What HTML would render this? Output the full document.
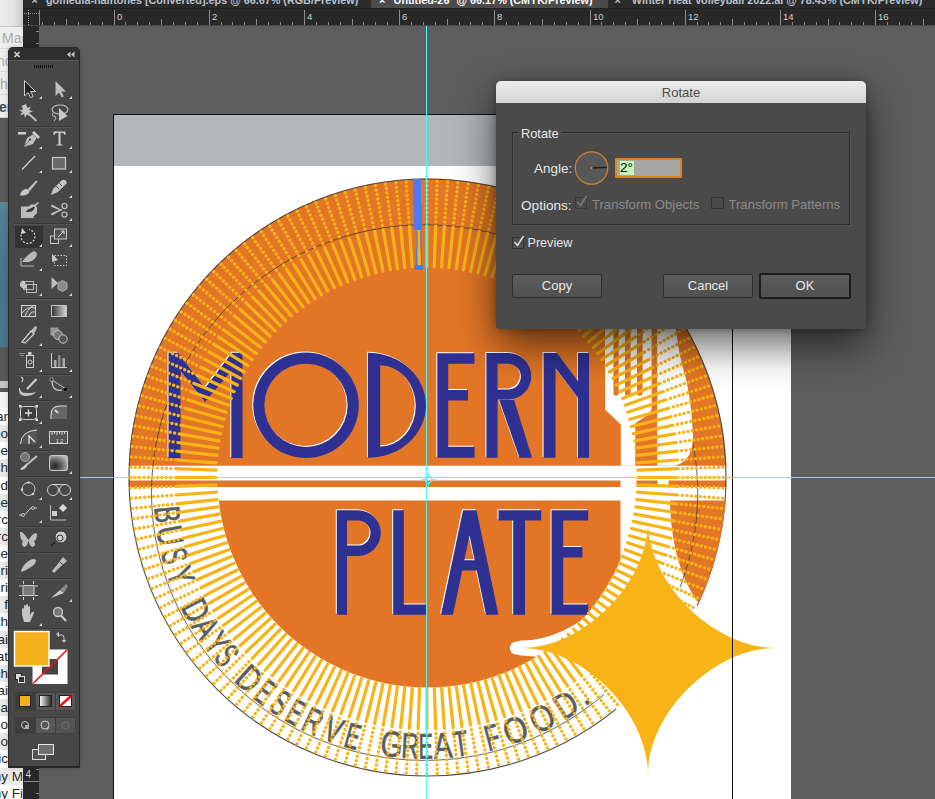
<!DOCTYPE html>
<html><head><meta charset="utf-8">
<style>
*{box-sizing:border-box;margin:0;padding:0}
html,body{width:935px;height:799px;overflow:hidden}
body{position:relative;background:#5e5e5e;font-family:"Liberation Sans",sans-serif}
.abs{position:absolute}
#leftwin{left:0;top:0;width:23px;height:799px;background:#f0f0f0;overflow:hidden}
#tabs{left:23px;top:0;width:912px;height:9px;background:#2a2a2a;overflow:hidden}
#tabs .t{position:absolute;top:-5.5px;height:11px;font-size:10.8px;line-height:11px;font-weight:bold;white-space:nowrap;color:#b9c1cc}
#hr{left:23px;top:9px;width:912px;height:17px;background:#282828}
#vr{left:23px;top:25px;width:16px;height:774px;background:#282828}
#tools{left:8px;top:47px;width:72px;height:721px;background:#474747;border-radius:5px 5px 0 0;border:1px solid #262626;border-bottom-width:2px;box-shadow:0 0 5px rgba(0,0,0,.22)}
#tools .hd{position:absolute;left:0;top:0;width:70px;height:13px;background:#2f2f2f;border-radius:4px 4px 0 0;border-bottom:1px solid #575757}
#dlg{left:496px;top:81px;width:370px;height:248px;background:#4a4a4a;border-radius:5px 5px 4px 4px;box-shadow:0 16px 42px rgba(0,0,0,.62),0 0 8px rgba(0,0,0,.3)}
#dlg .title{position:absolute;left:0;top:0;width:370px;height:22px;background:linear-gradient(#ececec,#d3d3d3);border-radius:5px 5px 0 0;text-align:center;font-size:13px;line-height:24px;color:#4a4a4a}
.lbl{position:absolute;font-size:12.5px;color:#e6e6e6;white-space:nowrap;line-height:15px}
.dis{color:#8a8a8a}
.btn{position:absolute;height:24px;background:linear-gradient(#5c5c5c,#505050);border:1px solid #2d2d2d;border-radius:2px;font-size:13px;line-height:22px;text-align:center;color:#e8e8e8}
</style></head><body>

<div id="leftwin" class="abs"><div class="abs" style="left:0;top:0;width:23px;height:26px;background:linear-gradient(90deg,#ededed,#e2e2e2 60%,#c9c9c9)"></div><div class="abs" style="left:0;top:26px;width:23px;height:1px;background:#c4c4c4"></div><div class="abs" style="left:0;top:27px;width:23px;height:22px;background:#eeeeee;border-bottom:1px solid #d6d6d6;overflow:hidden"><span style="position:absolute;left:2px;top:3px;font-size:14px;line-height:16px;color:#a9a9a9;font-weight:normal;white-space:nowrap">Mac</span></div><div class="abs" style="left:0;top:50px;width:23px;height:22px;background:#eeeeee;border-bottom:1px solid #d6d6d6;overflow:hidden"><span style="position:absolute;left:-3px;top:3px;font-size:14px;line-height:16px;color:#a9a9a9;font-weight:normal;white-space:nowrap">nc</span></div><div class="abs" style="left:0;top:73px;width:23px;height:22px;background:#eeeeee;border-bottom:1px solid #d6d6d6;overflow:hidden"><span style="position:absolute;left:0px;top:3px;font-size:14px;line-height:16px;color:#a9a9a9;font-weight:normal;white-space:nowrap">h</span></div><div class="abs" style="left:0;top:96px;width:23px;height:22px;background:#eeeeee;border-bottom:1px solid #d6d6d6;overflow:hidden"><span style="position:absolute;left:-1px;top:3px;font-size:14px;line-height:16px;color:#3a4a5a;font-weight:bold;white-space:nowrap">er</span></div><div class="abs" style="left:0;top:118px;width:23px;height:84px;background:#5a5a5a"></div><div class="abs" style="left:0;top:202px;width:23px;height:145px;background:linear-gradient(#5d8c9b,#4f8092 8%,#44758a 60%,#487a8c)"></div><div class="abs" style="left:0;top:347px;width:23px;height:34px;background:#585858"></div><div class="abs" style="left:0;top:381px;width:23px;height:7px;background:#c4c4c4"></div><div class="abs" style="left:0;top:388px;width:23px;height:4px;background:#565656"></div><div class="abs" style="left:0;top:392px;width:23px;height:16px;background:#f4f4f4"></div><div class="abs" style="left:0;top:408.0px;width:23px;height:17.2px;background:#ffffff;overflow:hidden"><span style="position:absolute;right:15px;top:1px;font-size:13.5px;line-height:16px;color:#2b2b2b;white-space:nowrap">ar</span></div><div class="abs" style="left:0;top:425.1px;width:23px;height:17.2px;background:#e9e9e9;overflow:hidden"><span style="position:absolute;right:15px;top:1px;font-size:13.5px;line-height:16px;color:#2b2b2b;white-space:nowrap">oo</span></div><div class="abs" style="left:0;top:442.2px;width:23px;height:17.2px;background:#ffffff;overflow:hidden"><span style="position:absolute;right:15px;top:1px;font-size:13.5px;line-height:16px;color:#2b2b2b;white-space:nowrap">le</span></div><div class="abs" style="left:0;top:459.4px;width:23px;height:17.2px;background:#e9e9e9;overflow:hidden"><span style="position:absolute;right:15px;top:1px;font-size:13.5px;line-height:16px;color:#2b2b2b;white-space:nowrap">ch</span></div><div class="abs" style="left:0;top:476.5px;width:23px;height:17.2px;background:#ffffff;overflow:hidden"><span style="position:absolute;right:15px;top:1px;font-size:13.5px;line-height:16px;color:#2b2b2b;white-space:nowrap">d</span></div><div class="abs" style="left:0;top:493.6px;width:23px;height:17.2px;background:#e9e9e9;overflow:hidden"><span style="position:absolute;right:15px;top:1px;font-size:13.5px;line-height:16px;color:#2b2b2b;white-space:nowrap">le</span></div><div class="abs" style="left:0;top:510.7px;width:23px;height:17.2px;background:#ffffff;overflow:hidden"><span style="position:absolute;right:15px;top:1px;font-size:13.5px;line-height:16px;color:#2b2b2b;white-space:nowrap">rc</span></div><div class="abs" style="left:0;top:527.8px;width:23px;height:17.2px;background:#e9e9e9;overflow:hidden"><span style="position:absolute;right:15px;top:1px;font-size:13.5px;line-height:16px;color:#2b2b2b;white-space:nowrap">rc</span></div><div class="abs" style="left:0;top:545.0px;width:23px;height:17.2px;background:#ffffff;overflow:hidden"><span style="position:absolute;right:15px;top:1px;font-size:13.5px;line-height:16px;color:#2b2b2b;white-space:nowrap">he</span></div><div class="abs" style="left:0;top:562.1px;width:23px;height:17.2px;background:#e9e9e9;overflow:hidden"><span style="position:absolute;right:15px;top:1px;font-size:13.5px;line-height:16px;color:#2b2b2b;white-space:nowrap">ri</span></div><div class="abs" style="left:0;top:579.2px;width:23px;height:17.2px;background:#ffffff;overflow:hidden"><span style="position:absolute;right:15px;top:1px;font-size:13.5px;line-height:16px;color:#2b2b2b;white-space:nowrap">ri</span></div><div class="abs" style="left:0;top:596.3px;width:23px;height:17.2px;background:#e9e9e9;overflow:hidden"><span style="position:absolute;right:15px;top:1px;font-size:13.5px;line-height:16px;color:#2b2b2b;white-space:nowrap">f</span></div><div class="abs" style="left:0;top:613.4px;width:23px;height:17.2px;background:#ffffff;overflow:hidden"><span style="position:absolute;right:15px;top:1px;font-size:13.5px;line-height:16px;color:#2b2b2b;white-space:nowrap">th</span></div><div class="abs" style="left:0;top:630.6px;width:23px;height:17.2px;background:#e9e9e9;overflow:hidden"><span style="position:absolute;right:15px;top:1px;font-size:13.5px;line-height:16px;color:#2b2b2b;white-space:nowrap">ai</span></div><div class="abs" style="left:0;top:647.7px;width:23px;height:17.2px;background:#ffffff;overflow:hidden"><span style="position:absolute;right:15px;top:1px;font-size:13.5px;line-height:16px;color:#2b2b2b;white-space:nowrap">at</span></div><div class="abs" style="left:0;top:664.8px;width:23px;height:17.2px;background:#e9e9e9;overflow:hidden"><span style="position:absolute;right:15px;top:1px;font-size:13.5px;line-height:16px;color:#2b2b2b;white-space:nowrap">ch</span></div><div class="abs" style="left:0;top:681.9px;width:23px;height:17.2px;background:#ffffff;overflow:hidden"><span style="position:absolute;right:15px;top:1px;font-size:13.5px;line-height:16px;color:#2b2b2b;white-space:nowrap">ai</span></div><div class="abs" style="left:0;top:699.0px;width:23px;height:17.2px;background:#e9e9e9;overflow:hidden"><span style="position:absolute;right:15px;top:1px;font-size:13.5px;line-height:16px;color:#2b2b2b;white-space:nowrap">ea</span></div><div class="abs" style="left:0;top:716.2px;width:23px;height:17.2px;background:#ffffff;overflow:hidden"><span style="position:absolute;right:15px;top:1px;font-size:13.5px;line-height:16px;color:#2b2b2b;white-space:nowrap">o</span></div><div class="abs" style="left:0;top:733.3px;width:23px;height:17.2px;background:#e9e9e9;overflow:hidden"><span style="position:absolute;right:15px;top:1px;font-size:13.5px;line-height:16px;color:#2b2b2b;white-space:nowrap">o</span></div><div class="abs" style="left:0;top:750.4px;width:23px;height:17.2px;background:#ffffff;overflow:hidden"><span style="position:absolute;right:15px;top:1px;font-size:13.5px;line-height:16px;color:#2b2b2b;white-space:nowrap">ic</span></div><div class="abs" style="left:0;top:767.5px;width:23px;height:17.2px;background:#e9e9e9;overflow:hidden"><span style="position:absolute;right:0px;top:1px;font-size:13.5px;line-height:16px;color:#2b2b2b;white-space:nowrap">ny M</span></div><div class="abs" style="left:0;top:784.6px;width:23px;height:17.2px;background:#ffffff;overflow:hidden"><span style="position:absolute;right:0px;top:1px;font-size:13.5px;line-height:16px;color:#2b2b2b;white-space:nowrap">ny Fi</span></div></div>
<div id="tabs" class="abs">
  <div class="t" style="left:8.5px">×</div>
  <div class="t" style="left:23px">gomedia-halftones [Converted].eps @ 66.67% (RGB/Preview)</div>
  <div class="abs" style="left:348px;top:0;width:237px;height:9px;background:#4b4b4b"></div>
  <div class="t" style="left:356px;color:#fff">×</div>
  <div class="t" style="left:370.6px;color:#fff">Untitled-26* @ 66.17% (CMYK/Preview)</div>
  <div class="t" style="left:591.5px">×</div>
  <div class="t" style="left:608.8px">Winter Heat Volleyball 2022.ai @ 78.43% (CMYK/Preview)</div>
  <div class="abs" style="left:0;top:8px;width:912px;height:1px;background:#1f1f1f"></div>
</div>
<div id="hr" class="abs"></div>
<div id="vr" class="abs"></div>

<svg class="abs" style="left:0;top:0" width="935" height="799">
 <g stroke="#8c8c8c" stroke-width="1"><line x1="42.5" y1="22" x2="42.5" y2="25" /><line x1="54.5" y1="22" x2="54.5" y2="25" /><line x1="66.5" y1="19" x2="66.5" y2="25" /><line x1="78.5" y1="22" x2="78.5" y2="25" /><line x1="90.5" y1="22" x2="90.5" y2="25" /><line x1="102.5" y1="22" x2="102.5" y2="25" /><line x1="114.5" y1="10" x2="114.5" y2="25" /><line x1="125.5" y1="22" x2="125.5" y2="25" /><line x1="137.5" y1="22" x2="137.5" y2="25" /><line x1="149.5" y1="22" x2="149.5" y2="25" /><line x1="161.5" y1="19" x2="161.5" y2="25" /><line x1="173.5" y1="22" x2="173.5" y2="25" /><line x1="185.5" y1="22" x2="185.5" y2="25" /><line x1="197.5" y1="22" x2="197.5" y2="25" /><line x1="209.5" y1="10" x2="209.5" y2="25" /><line x1="221.5" y1="22" x2="221.5" y2="25" /><line x1="232.5" y1="22" x2="232.5" y2="25" /><line x1="244.5" y1="22" x2="244.5" y2="25" /><line x1="256.5" y1="19" x2="256.5" y2="25" /><line x1="268.5" y1="22" x2="268.5" y2="25" /><line x1="280.5" y1="22" x2="280.5" y2="25" /><line x1="292.5" y1="22" x2="292.5" y2="25" /><line x1="304.5" y1="10" x2="304.5" y2="25" /><line x1="316.5" y1="22" x2="316.5" y2="25" /><line x1="328.5" y1="22" x2="328.5" y2="25" /><line x1="340.5" y1="22" x2="340.5" y2="25" /><line x1="352.5" y1="19" x2="352.5" y2="25" /><line x1="363.5" y1="22" x2="363.5" y2="25" /><line x1="375.5" y1="22" x2="375.5" y2="25" /><line x1="387.5" y1="22" x2="387.5" y2="25" /><line x1="399.5" y1="10" x2="399.5" y2="25" /><line x1="411.5" y1="22" x2="411.5" y2="25" /><line x1="423.5" y1="22" x2="423.5" y2="25" /><line x1="435.5" y1="22" x2="435.5" y2="25" /><line x1="447.5" y1="19" x2="447.5" y2="25" /><line x1="459.5" y1="22" x2="459.5" y2="25" /><line x1="470.5" y1="22" x2="470.5" y2="25" /><line x1="482.5" y1="22" x2="482.5" y2="25" /><line x1="494.5" y1="10" x2="494.5" y2="25" /><line x1="506.5" y1="22" x2="506.5" y2="25" /><line x1="518.5" y1="22" x2="518.5" y2="25" /><line x1="530.5" y1="22" x2="530.5" y2="25" /><line x1="542.5" y1="19" x2="542.5" y2="25" /><line x1="554.5" y1="22" x2="554.5" y2="25" /><line x1="566.5" y1="22" x2="566.5" y2="25" /><line x1="578.5" y1="22" x2="578.5" y2="25" /><line x1="590.5" y1="10" x2="590.5" y2="25" /><line x1="601.5" y1="22" x2="601.5" y2="25" /><line x1="613.5" y1="22" x2="613.5" y2="25" /><line x1="625.5" y1="22" x2="625.5" y2="25" /><line x1="637.5" y1="19" x2="637.5" y2="25" /><line x1="649.5" y1="22" x2="649.5" y2="25" /><line x1="661.5" y1="22" x2="661.5" y2="25" /><line x1="673.5" y1="22" x2="673.5" y2="25" /><line x1="685.5" y1="10" x2="685.5" y2="25" /><line x1="697.5" y1="22" x2="697.5" y2="25" /><line x1="708.5" y1="22" x2="708.5" y2="25" /><line x1="720.5" y1="22" x2="720.5" y2="25" /><line x1="732.5" y1="19" x2="732.5" y2="25" /><line x1="744.5" y1="22" x2="744.5" y2="25" /><line x1="756.5" y1="22" x2="756.5" y2="25" /><line x1="768.5" y1="22" x2="768.5" y2="25" /><line x1="780.5" y1="10" x2="780.5" y2="25" /><line x1="792.5" y1="22" x2="792.5" y2="25" /><line x1="804.5" y1="22" x2="804.5" y2="25" /><line x1="816.5" y1="22" x2="816.5" y2="25" /><line x1="828.5" y1="19" x2="828.5" y2="25" /><line x1="839.5" y1="22" x2="839.5" y2="25" /><line x1="851.5" y1="22" x2="851.5" y2="25" /><line x1="863.5" y1="22" x2="863.5" y2="25" /><line x1="875.5" y1="10" x2="875.5" y2="25" /><line x1="887.5" y1="22" x2="887.5" y2="25" /><line x1="899.5" y1="22" x2="899.5" y2="25" /><line x1="911.5" y1="22" x2="911.5" y2="25" /><line x1="923.5" y1="19" x2="923.5" y2="25" /><line x1="935.5" y1="22" x2="935.5" y2="25" /><line x1="36" y1="31.5" x2="39" y2="31.5" /><line x1="36" y1="43.5" x2="39" y2="43.5" /><line x1="36" y1="55.5" x2="39" y2="55.5" /><line x1="33" y1="67.5" x2="39" y2="67.5" /><line x1="36" y1="79.5" x2="39" y2="79.5" /><line x1="36" y1="90.5" x2="39" y2="90.5" /><line x1="36" y1="102.5" x2="39" y2="102.5" /><line x1="24" y1="114.5" x2="39" y2="114.5" /><line x1="36" y1="126.5" x2="39" y2="126.5" /><line x1="36" y1="138.5" x2="39" y2="138.5" /><line x1="36" y1="150.5" x2="39" y2="150.5" /><line x1="33" y1="162.5" x2="39" y2="162.5" /><line x1="36" y1="174.5" x2="39" y2="174.5" /><line x1="36" y1="186.5" x2="39" y2="186.5" /><line x1="36" y1="197.5" x2="39" y2="197.5" /><line x1="24" y1="209.5" x2="39" y2="209.5" /><line x1="36" y1="221.5" x2="39" y2="221.5" /><line x1="36" y1="233.5" x2="39" y2="233.5" /><line x1="36" y1="245.5" x2="39" y2="245.5" /><line x1="33" y1="257.5" x2="39" y2="257.5" /><line x1="36" y1="269.5" x2="39" y2="269.5" /><line x1="36" y1="281.5" x2="39" y2="281.5" /><line x1="36" y1="293.5" x2="39" y2="293.5" /><line x1="24" y1="305.5" x2="39" y2="305.5" /><line x1="36" y1="317.5" x2="39" y2="317.5" /><line x1="36" y1="328.5" x2="39" y2="328.5" /><line x1="36" y1="340.5" x2="39" y2="340.5" /><line x1="33" y1="352.5" x2="39" y2="352.5" /><line x1="36" y1="364.5" x2="39" y2="364.5" /><line x1="36" y1="376.5" x2="39" y2="376.5" /><line x1="36" y1="388.5" x2="39" y2="388.5" /><line x1="24" y1="400.5" x2="39" y2="400.5" /><line x1="36" y1="412.5" x2="39" y2="412.5" /><line x1="36" y1="424.5" x2="39" y2="424.5" /><line x1="36" y1="435.5" x2="39" y2="435.5" /><line x1="33" y1="447.5" x2="39" y2="447.5" /><line x1="36" y1="459.5" x2="39" y2="459.5" /><line x1="36" y1="471.5" x2="39" y2="471.5" /><line x1="36" y1="483.5" x2="39" y2="483.5" /><line x1="24" y1="495.5" x2="39" y2="495.5" /><line x1="36" y1="507.5" x2="39" y2="507.5" /><line x1="36" y1="519.5" x2="39" y2="519.5" /><line x1="36" y1="531.5" x2="39" y2="531.5" /><line x1="33" y1="543.5" x2="39" y2="543.5" /><line x1="36" y1="555.5" x2="39" y2="555.5" /><line x1="36" y1="566.5" x2="39" y2="566.5" /><line x1="36" y1="578.5" x2="39" y2="578.5" /><line x1="24" y1="590.5" x2="39" y2="590.5" /><line x1="36" y1="602.5" x2="39" y2="602.5" /><line x1="36" y1="614.5" x2="39" y2="614.5" /><line x1="36" y1="626.5" x2="39" y2="626.5" /><line x1="33" y1="638.5" x2="39" y2="638.5" /><line x1="36" y1="650.5" x2="39" y2="650.5" /><line x1="36" y1="662.5" x2="39" y2="662.5" /><line x1="36" y1="674.5" x2="39" y2="674.5" /><line x1="24" y1="685.5" x2="39" y2="685.5" /><line x1="36" y1="697.5" x2="39" y2="697.5" /><line x1="36" y1="709.5" x2="39" y2="709.5" /><line x1="36" y1="721.5" x2="39" y2="721.5" /><line x1="33" y1="733.5" x2="39" y2="733.5" /><line x1="36" y1="745.5" x2="39" y2="745.5" /><line x1="36" y1="757.5" x2="39" y2="757.5" /><line x1="36" y1="769.5" x2="39" y2="769.5" /><line x1="24" y1="781.5" x2="39" y2="781.5" /><line x1="36" y1="793.5" x2="39" y2="793.5" /></g>
 <line x1="23" y1="25.5" x2="935" y2="25.5" stroke="#4a4a4a"/>
 <g fill="#d0d0d0" font-size="9.5" font-family="Liberation Sans"><text x="117" y="20">0</text><text x="212" y="20">2</text><text x="307" y="20">4</text><text x="402" y="20">6</text><text x="497" y="20">8</text><text x="593" y="20">10</text><text x="688" y="20">12</text><text x="783" y="20">14</text><text x="878" y="20">16</text></g>
 <line x1="24" y1="13.5" x2="39" y2="13.5" stroke="#9a9a9a" stroke-dasharray="1 1"/>
 <line x1="28.5" y1="10" x2="28.5" y2="25" stroke="#9a9a9a" stroke-dasharray="1 1"/>
 <line x1="39.5" y1="10" x2="39.5" y2="25" stroke="#8c8c8c"/>
 <text x="25.5" y="777.5" fill="#d0d0d0" font-size="10" font-family="Liberation Sans">4</text>
</svg>

<!-- artboard -->
<div class="abs" style="left:733px;top:115px;width:58px;height:684px;background:#fff"></div>
<div class="abs" style="left:113px;top:114px;width:620px;height:690px;background:#fff;border:1px solid #111"></div>
<div class="abs" style="left:114px;top:115px;width:618px;height:51px;background:#b2b6b9"></div>

<svg class="abs" style="left:0;top:0" width="935" height="799">
 <defs>
  <clipPath id="up"><rect x="0" y="0" width="935" height="465.7"/></clipPath>
  <clipPath id="disk"><circle cx="427.5" cy="477.5" r="299"/></clipPath>
  <clipPath id="low"><rect x="0" y="500.5" width="620.5" height="400"/></clipPath>
 </defs>
 <circle cx="427.5" cy="477.5" r="299" fill="#e37626" clip-path="url(#up)"/>
 <g clip-path="url(#disk)" fill="#e37626">
  <rect x="100" y="480.5" width="520.5" height="6.5"/>
  <rect x="636.5" y="480.5" width="21" height="6.5"/>
  <rect x="668.5" y="480.5" width="80" height="6.5"/>
 </g>
 <circle cx="427.5" cy="477.5" r="210" fill="#e37626" clip-path="url(#low)"/>
 <circle cx="427.5" cy="477.5" r="298.5" fill="none" stroke="#4a4a4a" stroke-width="1.1"/>
 <path d="M670 500.5H760V650L697 601C683 580 671 550 670 500.5Z" fill="#e37626" clip-path="url(#disk)"/>
 <ellipse cx="424.6" cy="492.6" rx="273.1" ry="267.8" fill="none" stroke="#3c3c3c" stroke-width="0.8"/>
 <!-- right side fork/crescents -->
 <g clip-path="url(#disk)">
  <path d="M605 300V409.5L620.8 424.5V465.7H673Q692 463 693 438C692.5 415 689 390 685 375C681 360 676 345 674 300Z" fill="#fff"/>
  <path d="M613.5 300V393A2.6 2.6 0 0 0 618.7 393V300Z M625 300V393A2.8 2.8 0 0 0 630.6 393V300Z M637 300V393A2.8 2.8 0 0 0 642.6 393V300Z" fill="#e37626"/>
  <path d="M651.6 300V409Q651 414 635.3 423V465.7H657.2V300Z" fill="#e37626"/>
 </g>
 <!-- letters -->
 <g fill="#fff" transform="translate(-1,-1)"><path fill-rule="evenodd" d="M168.5 458V352.8H178L205 388L232 352.8H242.5V458H231.3V371L205 402L180.5 371V458Z"/><path fill-rule="evenodd" d="M306 352.5A52.8 52.8 0 1 1 306 458.1A52.8 52.8 0 1 1 306 352.5ZM306 363.7A41.6 41.6 0 1 0 306 446.9A41.6 41.6 0 1 0 306 363.7Z"/><path fill-rule="evenodd" d="M368 352.7A58 52.55 0 0 1 368 457.8ZM380.2 365.3A35.6 40.65 0 0 1 380.2 446.6Z"/><path d="M437.3 353.2H474.5V363.7H448.2V390H468V400.5H448.2V446.8H474.5V457.7H437.3Z"/><path fill-rule="evenodd" d="M486.4 353H508A23.3 23.3 0 0 1 508 399.6H497.6V457.7H486.4ZM497.6 363.7H508A12.9 12.9 0 0 1 508 389.5H497.6Z"/><path d="M499 399.5H514L532 457.7H519.5Z"/><path d="M543.6 353H557L578 381V353H589V457.7H578V398L555.5 368V457.7H543.6Z"/><path fill-rule="evenodd" d="M336.8 510.3H358A22.8 22.8 0 0 1 358 555.9H347V614.7H336.8ZM347 520.6H358A12.5 12.5 0 0 1 358 545.6H347Z"/><path d="M393.2 510.3H403.8V604.4H426.5V614.7H393.2Z"/><path fill-rule="evenodd" d="M441 614.7L463 510.3H476.5L498.5 614.7H486L476.8 570.6H462.2L453 614.7ZM469.5 535.3L474.7 560.3H464.3Z"/><path d="M498.5 510.3H541.2V520.6H525V614.7H513.2V520.6H498.5Z"/><path d="M551.5 510.3H588.2V520.6H563.2V547H582.4V557.4H563.2V604.4H588.2V614.7H551.5Z"/></g>
 <g fill="#2e3192"><path fill-rule="evenodd" d="M168.5 458V352.8H178L205 388L232 352.8H242.5V458H231.3V371L205 402L180.5 371V458Z"/><path fill-rule="evenodd" d="M306 352.5A52.8 52.8 0 1 1 306 458.1A52.8 52.8 0 1 1 306 352.5ZM306 363.7A41.6 41.6 0 1 0 306 446.9A41.6 41.6 0 1 0 306 363.7Z"/><path fill-rule="evenodd" d="M368 352.7A58 52.55 0 0 1 368 457.8ZM380.2 365.3A35.6 40.65 0 0 1 380.2 446.6Z"/><path d="M437.3 353.2H474.5V363.7H448.2V390H468V400.5H448.2V446.8H474.5V457.7H437.3Z"/><path fill-rule="evenodd" d="M486.4 353H508A23.3 23.3 0 0 1 508 399.6H497.6V457.7H486.4ZM497.6 363.7H508A12.9 12.9 0 0 1 508 389.5H497.6Z"/><path d="M499 399.5H514L532 457.7H519.5Z"/><path d="M543.6 353H557L578 381V353H589V457.7H578V398L555.5 368V457.7H543.6Z"/><path fill-rule="evenodd" d="M336.8 510.3H358A22.8 22.8 0 0 1 358 555.9H347V614.7H336.8ZM347 520.6H358A12.5 12.5 0 0 1 358 545.6H347Z"/><path d="M393.2 510.3H403.8V604.4H426.5V614.7H393.2Z"/><path fill-rule="evenodd" d="M441 614.7L463 510.3H476.5L498.5 614.7H486L476.8 570.6H462.2L453 614.7ZM469.5 535.3L474.7 560.3H464.3Z"/><path d="M498.5 510.3H541.2V520.6H525V614.7H513.2V520.6H498.5Z"/><path d="M551.5 510.3H588.2V520.6H563.2V547H582.4V557.4H563.2V604.4H588.2V614.7H551.5Z"/></g>
 <!-- curved text -->
 <g font-family="Liberation Sans" font-size="36" fill="#585d64" stroke="#585d64" stroke-width="0.7" text-anchor="middle"><text transform="translate(155.11,515.55) rotate(84.97) scale(0.699,1)">B</text><text transform="translate(158.02,537.72) rotate(80.07) scale(0.752,1)">U</text><text transform="translate(162.65,558.95) rotate(75.32) scale(0.601,1)">S</text><text transform="translate(169.10,579.95) rotate(70.53) scale(0.708,1)">Y</text><text transform="translate(185.05,616.15) rotate(61.93) scale(0.818,1)">D</text><text transform="translate(195.64,634.25) rotate(57.39) scale(0.783,1)">A</text><text transform="translate(207.02,650.64) rotate(53.09) scale(0.708,1)">Y</text><text transform="translate(217.40,663.60) rotate(49.52) scale(0.601,1)">S</text><text transform="translate(240.98,687.93) rotate(42.27) scale(0.818,1)">D</text><text transform="translate(257.80,702.01) rotate(37.60) scale(0.602,1)">E</text><text transform="translate(273.44,713.19) rotate(33.53) scale(0.601,1)">S</text><text transform="translate(289.66,723.14) rotate(29.51) scale(0.602,1)">E</text><text transform="translate(307.89,732.57) rotate(25.19) scale(0.684,1)">R</text><text transform="translate(329.18,741.50) rotate(20.34) scale(0.714,1)">V</text><text transform="translate(349.54,748.15) rotate(15.86) scale(0.602,1)">E</text><text transform="translate(390.28,756.45) rotate(7.17) scale(0.797,1)">G</text><text transform="translate(409.74,758.20) rotate(3.10) scale(0.684,1)">R</text><text transform="translate(425.66,758.60) rotate(-0.22) scale(0.602,1)">E</text><text transform="translate(443.70,757.94) rotate(-3.98) scale(0.783,1)">A</text><text transform="translate(462.50,755.98) rotate(-7.92) scale(0.662,1)">T</text><text transform="translate(495.36,749.34) rotate(-14.92) scale(0.650,1)">F</text><text transform="translate(519.62,741.65) rotate(-20.25) scale(0.854,1)">O</text><text transform="translate(547.59,729.51) rotate(-26.66) scale(0.854,1)">O</text><text transform="translate(572.58,715.27) rotate(-32.73) scale(0.818,1)">D</text><text transform="translate(588.54,704.18) rotate(-36.84) scale(0.972,1)">.</text></g>
 <!-- star -->
 <path d="M648 521.5C648 583.5 714 648 776 648C714 648 648 712.5 648 774.5C648 712.5 583.4 648 521.4 648C583.4 648 648 583.5 648 521.5Z" fill="#fff" stroke="#fff" stroke-width="15" stroke-linejoin="round"/>
 <circle cx="516.5" cy="648" r="6.6" fill="#fff"/>
 <path d="M648 521.5C648 583.5 714 648 776 648C714 648 648 712.5 648 774.5C648 712.5 583.4 648 521.4 648C583.4 648 648 583.5 648 521.5Z" fill="#f8b417"/>
 <!-- rays -->
 <g stroke="#f8b417">
  <path d="M426.9 266.5L426.9 226.0M434.3 266.6L435.7 226.2M441.6 267.0L444.4 226.6M449.0 267.7L453.2 227.4M456.3 268.6L461.9 228.4M463.5 269.7L470.6 229.8M470.8 271.1L479.2 231.5M477.9 272.8L487.7 233.5M485.1 274.7L496.2 235.7M492.1 276.8L504.6 238.3M499.1 279.2L512.9 241.2M505.9 281.9L521.1 244.3M512.7 284.7L529.2 247.7M519.4 287.9L537.2 251.5M526.0 291.2L545.0 255.4M532.4 294.8L552.6 259.7M538.7 298.6L560.2 264.2M544.9 302.6L567.5 269.0M550.9 306.8L574.7 274.0M556.8 311.2L581.7 279.3M562.5 315.9L588.6 284.8M568.1 320.7L595.2 290.6M573.5 325.7L601.6 296.6M578.7 330.9L607.8 302.8M583.7 336.3L613.8 309.2M588.5 341.9L619.6 315.8M593.2 347.6L625.1 322.7M597.6 353.5L630.4 329.7M601.8 359.5L635.4 336.9M605.8 365.7L640.2 344.2M609.6 372.0L644.7 351.8M613.2 378.4L649.0 359.4M616.5 385.0L652.9 367.2M619.7 391.7L656.7 375.2M622.5 398.5L660.1 383.3M625.2 405.3L663.2 391.5M627.6 412.3L666.1 399.8M629.7 419.3L668.7 408.2M631.6 426.5L670.9 416.7M633.3 433.6L672.9 425.2M634.7 440.9L674.6 433.8M635.8 448.1L676.0 442.5M636.7 455.4L677.0 451.2M637.4 462.8L677.8 460.0M637.8 470.1L678.2 468.7M637.9 477.5L678.4 477.5M637.8 484.9L678.2 486.3M637.4 492.2L677.8 495.0M636.7 499.6L677.0 503.8M635.8 506.9L676.0 512.5M634.7 514.1L674.6 521.2M633.3 521.4L672.9 529.8M631.6 528.5L670.9 538.3M629.7 535.7L668.7 546.8M627.6 542.7L666.1 555.2M625.2 549.7L663.2 563.5M622.5 556.5L660.1 571.7M619.7 563.3L656.7 579.8M616.5 570.0L652.9 587.8M613.2 576.6L649.0 595.6M609.6 583.0L644.7 603.2M605.8 589.3L640.2 610.8M601.8 595.5L635.4 618.1M597.6 601.5L630.4 625.3M593.2 607.4L625.1 632.3M588.5 613.1L619.6 639.2M583.7 618.7L613.8 645.8M578.7 624.1L607.8 652.2M573.5 629.3L601.6 658.4M568.1 634.3L595.2 664.4M562.5 639.1L588.6 670.2M556.8 643.8L581.7 675.7M550.9 648.2L574.7 681.0M544.9 652.4L567.5 686.0M538.7 656.4L560.2 690.8M532.4 660.2L552.6 695.3M526.0 663.8L545.0 699.6M519.4 667.1L537.2 703.5M512.7 670.3L529.2 707.3M505.9 673.1L521.1 710.7M499.1 675.8L512.9 713.8M492.1 678.2L504.6 716.7M485.1 680.3L496.2 719.3M477.9 682.2L487.7 721.5M470.8 683.9L479.2 723.5M463.5 685.3L470.6 725.2M456.3 686.4L461.9 726.6M449.0 687.3L453.2 727.6M441.6 688.0L444.4 728.4M434.3 688.4L435.7 728.8M426.9 688.5L426.9 729.0M419.5 688.4L418.1 728.8M412.2 688.0L409.4 728.4M404.8 687.3L400.6 727.6M397.5 686.4L391.9 726.6M390.3 685.3L383.2 725.2M383.0 683.9L374.6 723.5M375.9 682.2L366.1 721.5M368.7 680.3L357.6 719.3M361.7 678.2L349.2 716.7M354.7 675.8L340.9 713.8M347.9 673.1L332.7 710.7M341.1 670.3L324.6 707.3M334.4 667.1L316.6 703.5M327.8 663.8L308.8 699.6M321.4 660.2L301.1 695.3M315.1 656.4L293.6 690.8M308.9 652.4L286.3 686.0M302.9 648.2L279.1 681.0M297.0 643.8L272.1 675.7M291.3 639.1L265.2 670.2M285.7 634.3L258.6 664.4M280.3 629.3L252.2 658.4M275.1 624.1L246.0 652.2M270.1 618.7L240.0 645.8M265.3 613.1L234.2 639.2M260.6 607.4L228.7 632.3M256.2 601.5L223.4 625.3M252.0 595.5L218.4 618.1M248.0 589.3L213.6 610.8M244.2 583.0L209.1 603.3M240.6 576.6L204.8 595.6M237.3 570.0L200.9 587.8M234.1 563.3L197.1 579.8M231.3 556.5L193.7 571.7M228.6 549.7L190.6 563.5M226.2 542.7L187.7 555.2M224.1 535.7L185.1 546.8M222.2 528.5L182.9 538.3M220.5 521.4L180.9 529.8M219.1 514.1L179.2 521.2M218.0 506.9L177.8 512.5M217.1 499.6L176.8 503.8M216.4 492.2L176.0 495.0M216.0 484.9L175.6 486.3M215.9 477.5L175.4 477.5M216.0 470.1L175.6 468.7M216.4 462.8L176.0 460.0M217.1 455.4L176.8 451.2M218.0 448.1L177.8 442.5M219.1 440.9L179.2 433.8M220.5 433.6L180.9 425.2M222.2 426.5L182.9 416.7M224.1 419.3L185.1 408.2M226.2 412.3L187.7 399.8M228.6 405.3L190.6 391.5M231.3 398.5L193.7 383.3M234.1 391.7L197.1 375.2M237.3 385.0L200.9 367.2M240.6 378.4L204.8 359.4M244.2 372.0L209.1 351.8M248.0 365.7L213.6 344.2M252.0 359.5L218.4 336.9M256.2 353.5L223.4 329.7M260.6 347.6L228.7 322.7M265.3 341.9L234.2 315.8M270.1 336.3L240.0 309.2M275.1 330.9L246.0 302.8M280.3 325.7L252.2 296.6M285.7 320.7L258.6 290.6M291.3 315.9L265.2 284.8M297.0 311.2L272.1 279.3M302.9 306.8L279.1 274.0M308.9 302.6L286.3 269.0M315.1 298.6L293.6 264.2M321.4 294.8L301.1 259.7M327.8 291.2L308.8 255.4M334.4 287.9L316.6 251.5M341.1 284.7L324.6 247.7M347.9 281.9L332.7 244.3M354.7 279.2L340.9 241.2M361.7 276.8L349.2 238.3M368.7 274.7L357.6 235.7M375.9 272.8L366.1 233.5M383.0 271.1L374.6 231.5M390.3 269.7L383.2 229.8M397.5 268.6L391.9 228.4M404.8 267.7L400.6 227.4M412.2 267.0L409.4 226.6M419.5 266.6L418.1 226.2" stroke-width="3.2" stroke-linecap="round"/>
  <path d="M426.90 181.20L426.90 223.00M437.24 181.38L435.78 223.16M447.57 181.92L444.65 223.62M457.87 182.82L453.50 224.39M468.14 184.08L462.32 225.48M478.35 185.70L471.09 226.87M488.50 187.67L479.81 228.56M498.58 190.00L488.47 230.56M508.57 192.68L497.05 232.86M518.46 195.70L505.54 235.46M528.24 199.07L513.94 238.35M537.90 202.78L522.24 241.53M547.42 206.82L530.41 245.00M556.79 211.19L538.47 248.76M566.00 215.88L546.38 252.79M575.05 220.90L554.15 257.10M583.92 226.22L561.76 261.67M592.59 231.86L569.21 266.51M601.06 237.79L576.49 271.61M609.32 244.01L583.59 276.95M617.36 250.52L590.49 282.54M625.16 257.31L597.19 288.37M632.73 264.36L603.69 294.43M640.04 271.67L609.97 300.71M647.09 279.24L616.03 307.21M653.88 287.04L621.86 313.91M660.39 295.08L627.45 320.81M666.61 303.34L632.79 327.91M672.54 311.81L637.89 335.19M678.18 320.48L642.73 342.64M683.50 329.35L647.30 350.25M688.52 338.40L651.61 358.02M693.21 347.61L655.64 365.93M697.58 356.98L659.40 373.99M701.62 366.50L662.87 382.16M705.33 376.16L666.05 390.46M708.70 385.94L668.94 398.86M711.72 395.83L671.54 407.35M714.40 405.82L673.84 415.93M716.73 415.90L675.84 424.59M718.70 426.05L677.53 433.31M720.32 436.26L678.92 442.08M721.58 446.53L680.01 450.90M722.48 456.83L680.78 459.75M723.02 467.16L681.24 468.62M723.20 477.50L681.40 477.50M723.02 487.84L681.24 486.38M722.48 498.17L680.78 495.25M721.58 508.47L680.01 504.10M720.32 518.74L678.92 512.92M718.70 528.95L677.53 521.69M716.73 539.10L675.84 530.41M714.40 549.18L673.84 539.07M711.72 559.17L671.54 547.65M708.70 569.06L668.94 556.14M705.33 578.84L666.05 564.54M701.62 588.50L662.87 572.84M697.58 598.02L659.40 581.01M693.21 607.39L655.64 589.07M688.52 616.60L651.61 596.98M683.50 625.65L647.30 604.75M678.18 634.52L642.73 612.36M672.54 643.19L637.89 619.81M666.61 651.66L632.79 627.09M660.39 659.92L627.45 634.19M653.88 667.96L621.86 641.09M647.09 675.76L616.03 647.79M640.04 683.33L609.97 654.29M632.73 690.64L603.69 660.57M625.16 697.69L597.19 666.63M617.36 704.48L590.49 672.46M609.32 710.99L583.59 678.05M601.06 717.21L576.49 683.39M592.59 723.14L569.21 688.49M583.92 728.78L561.76 693.33M575.05 734.10L554.15 697.90M566.00 739.12L546.38 702.21M556.79 743.81L538.47 706.24M547.42 748.18L530.41 710.00M537.90 752.22L522.24 713.47M528.24 755.93L513.94 716.65M518.46 759.30L505.54 719.54M508.57 762.32L497.05 722.14M498.58 765.00L488.47 724.44M488.50 767.33L479.81 726.44M478.35 769.30L471.09 728.13M468.14 770.92L462.32 729.52M457.87 772.18L453.50 730.61M447.57 773.08L444.65 731.38M437.24 773.62L435.78 731.84M426.90 773.80L426.90 732.00M416.56 773.62L418.02 731.84M406.23 773.08L409.15 731.38M395.93 772.18L400.30 730.61M385.66 770.92L391.48 729.52M375.45 769.30L382.71 728.13M365.30 767.33L373.99 726.44M355.22 765.00L365.33 724.44M345.23 762.32L356.75 722.14M335.34 759.30L348.26 719.54M325.56 755.93L339.86 716.65M315.90 752.22L331.56 713.47M306.38 748.18L323.39 710.00M297.01 743.81L315.33 706.24M287.80 739.12L307.42 702.21M278.75 734.10L299.65 697.90M269.88 728.78L292.04 693.33M261.21 723.14L284.59 688.49M252.74 717.21L277.31 683.39M244.48 710.99L270.21 678.05M236.44 704.48L263.31 672.46M228.64 697.69L256.61 666.63M221.07 690.64L250.11 660.57M213.76 683.33L243.83 654.29M206.71 675.76L237.77 647.79M199.92 667.96L231.94 641.09M193.41 659.92L226.35 634.19M187.19 651.66L221.01 627.09M181.26 643.19L215.91 619.81M175.62 634.52L211.07 612.36M170.30 625.65L206.50 604.75M165.28 616.60L202.19 596.98M160.59 607.39L198.16 589.07M156.22 598.02L194.40 581.01M152.18 588.50L190.93 572.84M148.47 578.84L187.75 564.54M145.10 569.06L184.86 556.14M142.08 559.17L182.26 547.65M139.40 549.18L179.96 539.07M137.07 539.10L177.96 530.41M135.10 528.95L176.27 521.69M133.48 518.74L174.88 512.92M132.22 508.47L173.79 504.10M131.32 498.17L173.02 495.25M130.78 487.84L172.56 486.38M130.60 477.50L172.40 477.50M130.78 467.16L172.56 468.62M131.32 456.83L173.02 459.75M132.22 446.53L173.79 450.90M133.48 436.26L174.88 442.08M135.10 426.05L176.27 433.31M137.07 415.90L177.96 424.59M139.40 405.82L179.96 415.93M142.08 395.83L182.26 407.35M145.10 385.94L184.86 398.86M148.47 376.16L187.75 390.46M152.18 366.50L190.93 382.16M156.22 356.98L194.40 373.99M160.59 347.61L198.16 365.93M165.28 338.40L202.19 358.02M170.30 329.35L206.50 350.25M175.62 320.48L211.07 342.64M181.26 311.81L215.91 335.19M187.19 303.34L221.01 327.91M193.41 295.08L226.35 320.81M199.92 287.04L231.94 313.91M206.71 279.24L237.77 307.21M213.76 271.67L243.83 300.71M221.07 264.36L250.11 294.43M228.64 257.31L256.61 288.37M236.44 250.52L263.31 282.54M244.48 244.01L270.21 276.95M252.74 237.79L277.31 271.61M261.21 231.86L284.59 266.51M269.88 226.22L292.04 261.67M278.75 220.90L299.65 257.10M287.80 215.88L307.42 252.79M297.01 211.19L315.33 248.76M306.38 206.82L323.39 245.00M315.90 202.78L331.56 241.53M325.56 199.07L339.86 238.35M335.34 195.70L348.26 235.46M345.23 192.68L356.75 232.86M355.22 190.00L365.33 230.56M365.30 187.67L373.99 228.56M375.45 185.70L382.71 226.87M385.66 184.08L391.48 225.48M395.93 182.82L400.30 224.39M406.23 181.92L409.15 223.62M416.56 181.38L418.02 223.16" stroke-width="3.3" stroke-linecap="round" stroke-dasharray="0.1 4.35"/>
 </g>
 <!-- blue indicator -->
 <path d="M413 179H421V204.5H422V230H414V204.5H413Z" fill="#4a7cf5"/>
 <path d="M417 230.5V248L416.5 250V265M421 230.5V248L421.5 250V265" fill="none" stroke="#4a7cf5" stroke-width="1.2"/>
 <rect x="414.8" y="265" width="8.2" height="4.8" fill="#4a7cf5"/>
 <path d="M113.5 799V114.5H732.5V799" fill="none" stroke="#111" stroke-width="1"/>
 <!-- guides -->
 <line x1="426.5" y1="26" x2="426.5" y2="799" stroke="#4dfafa" stroke-width="1"/>
 <line x1="39" y1="477.5" x2="935" y2="477.5" stroke="#4dfafa" stroke-width="1"/>
 <g stroke="#4dfafa" stroke-width="1.1" fill="none"><circle cx="428.5" cy="479.5" r="3.2"/><path d="M428.5 472.8V476.2M428.5 482.8V486.2M422 479.5H425.3M431.7 479.5H435"/></g>
</svg>

<div id="tools" class="abs"><div class="hd"></div></div>
<svg class="abs" style="left:0;top:0" width="935" height="799"><line x1="14" y1="126.5" x2="74" y2="126.5" stroke="#3a3a3a"/><line x1="14" y1="127.5" x2="74" y2="127.5" stroke="#525252"/><line x1="14" y1="223.5" x2="74" y2="223.5" stroke="#3a3a3a"/><line x1="14" y1="224.5" x2="74" y2="224.5" stroke="#525252"/><line x1="14" y1="298.5" x2="74" y2="298.5" stroke="#3a3a3a"/><line x1="14" y1="299.5" x2="74" y2="299.5" stroke="#525252"/><line x1="14" y1="348.5" x2="74" y2="348.5" stroke="#3a3a3a"/><line x1="14" y1="349.5" x2="74" y2="349.5" stroke="#525252"/><line x1="14" y1="374.5" x2="74" y2="374.5" stroke="#3a3a3a"/><line x1="14" y1="375.5" x2="74" y2="375.5" stroke="#525252"/><line x1="14" y1="400.5" x2="74" y2="400.5" stroke="#3a3a3a"/><line x1="14" y1="401.5" x2="74" y2="401.5" stroke="#525252"/><line x1="14" y1="450.5" x2="74" y2="450.5" stroke="#3a3a3a"/><line x1="14" y1="451.5" x2="74" y2="451.5" stroke="#525252"/><line x1="14" y1="476.5" x2="74" y2="476.5" stroke="#3a3a3a"/><line x1="14" y1="477.5" x2="74" y2="477.5" stroke="#525252"/><line x1="14" y1="526.5" x2="74" y2="526.5" stroke="#3a3a3a"/><line x1="14" y1="527.5" x2="74" y2="527.5" stroke="#525252"/><line x1="14" y1="552.5" x2="74" y2="552.5" stroke="#3a3a3a"/><line x1="14" y1="553.5" x2="74" y2="553.5" stroke="#525252"/><line x1="14" y1="578.5" x2="74" y2="578.5" stroke="#3a3a3a"/><line x1="14" y1="579.5" x2="74" y2="579.5" stroke="#525252"/><line x1="14" y1="628.5" x2="74" y2="628.5" stroke="#3a3a3a"/><line x1="14" y1="629.5" x2="74" y2="629.5" stroke="#525252"/><rect x="15" y="226" width="28" height="22" fill="#333"/><path d="M39 99L42 99L42 96Z" fill="#d8d8d8"/><path d="M69 99L72 99L72 96Z" fill="#d8d8d8"/><path d="M39 149L42 149L42 146Z" fill="#d8d8d8"/><path d="M69 149L72 149L72 146Z" fill="#d8d8d8"/><path d="M39 173L42 173L42 170Z" fill="#d8d8d8"/><path d="M69 173L72 173L72 170Z" fill="#d8d8d8"/><path d="M69 198L72 198L72 195Z" fill="#d8d8d8"/><path d="M69 221L72 221L72 218Z" fill="#d8d8d8"/><path d="M39 247L42 247L42 244Z" fill="#d8d8d8"/><path d="M69 247L72 247L72 244Z" fill="#d8d8d8"/><path d="M39 271L42 271L42 268Z" fill="#d8d8d8"/><path d="M39 296L42 296L42 293Z" fill="#d8d8d8"/><path d="M69 296L72 296L72 293Z" fill="#d8d8d8"/><path d="M39 346L42 346L42 343Z" fill="#d8d8d8"/><path d="M39 372L42 372L42 369Z" fill="#d8d8d8"/><path d="M69 372L72 372L72 369Z" fill="#d8d8d8"/><path d="M39 398L42 398L42 395Z" fill="#d8d8d8"/><path d="M69 398L72 398L72 395Z" fill="#d8d8d8"/><path d="M39 424L42 424L42 421Z" fill="#d8d8d8"/><path d="M39 448L42 448L42 445Z" fill="#d8d8d8"/><path d="M69 474L72 474L72 471Z" fill="#d8d8d8"/><path d="M39 500L42 500L42 497Z" fill="#d8d8d8"/><path d="M69 500L72 500L72 497Z" fill="#d8d8d8"/><path d="M39 523L42 523L42 520Z" fill="#d8d8d8"/><path d="M69 602L72 602L72 599Z" fill="#d8d8d8"/><path d="M39 626L42 626L42 623Z" fill="#d8d8d8"/><path d="M24.5 80.5V96L28 92.5L30.8 97.6L33.2 96.4L30.6 91.5H35.5Z" fill="#222" stroke="#cfcfcf" stroke-width="1"/><path d="M55.5 81V96L59 92.5L61.8 97.6L63.8 96.6L61.4 91.5H66Z" fill="#bdbdbd"/><path d="M26 104L27.3 108L31 106.5L29 110L33 111.5L29 112.8L30.5 116.5L26.8 114.5L25 118L24 114L20 115.5L22.5 112L19 110.5L23 109.5L21.5 106Z" fill="#c4c4c4"/><line x1="29" y1="114" x2="36.5" y2="121" stroke="#bdbdbd" stroke-width="1.8"/><ellipse cx="60" cy="109.5" rx="8" ry="4.5" fill="none" stroke="#bdbdbd" stroke-width="1.2"/><path d="M59 108V121L67.5 116Z" fill="#c8c8c8"/><path d="M53 113Q51 117 55 116Q57 119 54 121" fill="none" stroke="#bdbdbd" stroke-width="1"/><rect x="18" y="132" width="8" height="2.5" fill="#cfcfcf"/><path d="M24 147L27 138L33 134.5L36.5 138L33 144Z" fill="#bfbfbf"/><path d="M32 133L34 131L40 137L38 139Z" fill="#cfcfcf"/><circle cx="30" cy="139.5" r="1" fill="#222"/><line x1="24.5" y1="146.5" x2="30" y2="139.5" stroke="#444" stroke-width=".6"/><path d="M53.5 131.5H65.5V135H64.5Q64 132.8 62 132.8H60.5V144.5H62.5V145.5H56.5V144.5H58.5V132.8H57Q55 132.8 54.5 135H53.5Z" fill="#cfcfcf"/><line x1="22" y1="169.5" x2="35" y2="156" stroke="#d0d0d0" stroke-width="1.3"/><rect x="52.5" y="157.5" width="13" height="11.5" fill="#686868" stroke="#c8c8c8" stroke-width="1.2"/><path d="M20 195.5Q21 190 25.5 189Q28.5 188.5 29.5 191Q29 194.5 24 195.5Z" fill="#c8c8c8"/><path d="M28 189L36 180.5Q37.5 180 37.5 181.5L30 191Z" fill="#bdbdbd"/><path d="M51 195L53 189L62 180Q65 179 66 181L67 183L58 192Z" fill="#c4c4c4"/><path d="M56 186L59 189M59 183L62 186" stroke="#555" stroke-width="1"/><path d="M21 206.5H28.5L31 204.5H34.5L37 207.5V213L33.5 216.5V218H21Z" fill="#bdbdbd"/><path d="M25.5 211.5Q28 208.5 31.5 208L34 206.5L35 207.5L33.5 210Q31 213 25.5 211.5Z" fill="#3a3a3a"/><path d="M34 206.5L38.5 202.5" stroke="#c8c8c8" stroke-width="1.6"/><path d="M51 206L61.5 210.5L52 205M51 214L61.5 209.5L52 215" fill="#c8c8c8" stroke="#c8c8c8" stroke-width="1"/><circle cx="64.5" cy="206" r="2.5" fill="none" stroke="#c8c8c8" stroke-width="1.2"/><circle cx="64.5" cy="214.5" r="2.5" fill="none" stroke="#c8c8c8" stroke-width="1.2"/><path d="M23 231.5A7 7 0 1 0 29 229.5" fill="none" stroke="#d0d0d0" stroke-width="1.3" stroke-dasharray="2 1.6"/><path d="M22 228L26 233L21 234Z" fill="#d0d0d0"/><rect x="50.5" y="236" width="8" height="7.5" fill="none" stroke="#c8c8c8"/><rect x="54.5" y="229" width="12" height="10" fill="#555" stroke="#c8c8c8"/><path d="M58 237L64 231M61 231H64V234" stroke="#ddd" fill="none"/><path d="M22 262Q26 256 32 252Q36 250 37 254Q36 260 29 262Z" fill="#b8b8b8"/><path d="M21 258V266H34" fill="none" stroke="#bdbdbd"/><path d="M52 254L58 260L52 262Z" fill="#c8c8c8"/><rect x="54.5" y="255.5" width="12" height="10" fill="none" stroke="#c8c8c8" stroke-dasharray="1.5 1.5"/><rect x="23.5" y="281.5" width="10" height="8" fill="none" stroke="#b8b8b8"/><rect x="26.5" y="284.5" width="10" height="8" fill="none" stroke="#b8b8b8"/><path d="M20 284Q22 278 25 282L27 288Q23 290 20 286Z" fill="#c4c4c4"/><path d="M51.5 277V289L58 283Z" fill="#c0c0c0"/><path d="M58 283L62.5 280.5L67 283V289L62.5 291.5L58 289Z" fill="#8a8a8a" stroke="#bdbdbd" stroke-width=".8"/><rect x="21.5" y="305.5" width="14" height="11" fill="#555" stroke="#d0d0d0"/><path d="M22 313Q27 306 35 308M25 317Q27 309 33 306M29 317Q30 311 35 312" stroke="#d8d8d8" fill="none" stroke-width=".9"/><defs><linearGradient id="gr1"><stop offset="0" stop-color="#333"/><stop offset="1" stop-color="#d8d8d8"/></linearGradient></defs><rect x="51.5" y="305.5" width="15" height="11" fill="url(#gr1)" stroke="#c0c0c0"/><path d="M22 342L31 331L34 334L25 343Z" fill="none" stroke="#d0d0d0" stroke-width="1.2"/><path d="M31 331L35 326Q37 326 37 328L34 334Z" fill="#bdbdbd"/><rect x="50.5" y="327.5" width="8" height="8" fill="#999"/><circle cx="58" cy="335" r="4.5" fill="#777" stroke="#bdbdbd"/><circle cx="63" cy="339" r="4.2" fill="#555" stroke="#c8c8c8"/><rect x="26.5" y="355.5" width="7" height="12" fill="none" stroke="#cfcfcf"/><circle cx="30" cy="362" r="2" fill="none" stroke="#cfcfcf"/><rect x="28" y="352" width="3.5" height="3" fill="#ccc"/><path d="M19.5 353.5h1M21.5 353.5h1M23.5 353.5h1M20.5 355.5h1M22.5 355.5h1" stroke="#ddd"/><path d="M51.5 353V367.5H67" fill="none" stroke="#d0d0d0"/><rect x="54" y="360" width="2.5" height="7" fill="#aaa"/><rect x="58" y="355" width="2.5" height="12" fill="#888"/><rect x="62.5" y="358" width="2.5" height="9" fill="#aaa"/><path d="M20 388Q20 393 26 393Q33 393 36 392Q33 396 25 396Q18 395 19 388Z" fill="#c4c4c4"/><line x1="27" y1="389" x2="36.5" y2="379" stroke="#c4c4c4" stroke-width="2.4"/><path d="M22 382Q24 378 21 377" stroke="#bbb" fill="none" stroke-width="1.4"/><path d="M52 380Q52 392 62 390" fill="none" stroke="#c8c8c8" stroke-width="1.3"/><line x1="52" y1="380" x2="66" y2="389" stroke="#c8c8c8" stroke-width="1"/><rect x="50" y="378" width="3" height="3" fill="#222" stroke="#ccc" stroke-width=".6"/><rect x="64" y="388" width="3" height="3" fill="#111"/><rect x="20.5" y="406.5" width="16" height="13" rx="3" fill="#3e3e3e" stroke="#cfcfcf"/><path d="M28.5 409.5V416.5M25 413H32" stroke="#e0e0e0" stroke-width="1.3"/><rect x="19" y="405" width="2.5" height="2.5" fill="#ddd"/><rect x="35.5" y="405" width="2.5" height="2.5" fill="#ddd"/><rect x="19" y="418.5" width="2.5" height="2.5" fill="#ddd"/><rect x="35.5" y="418.5" width="2.5" height="2.5" fill="#ddd"/><path d="M51 419V415Q51 406 60 406H67V419Z" fill="#666"/><path d="M51 419V415Q51 406 60 406H67" fill="none" stroke="#ddd" stroke-width="1.1"/><path d="M55 410L58 413" stroke="#eee" stroke-width="1.6"/><path d="M20.5 444Q21 431 37 430V444Z" fill="#555"/><path d="M20.5 444Q21 431 37 430" fill="none" stroke="#ddd"/><path d="M29 444V436L35 442" fill="none" stroke="#eee" stroke-width="1.2"/><rect x="49.5" y="431.5" width="18" height="12" fill="#555" stroke="#d0d0d0"/><path d="M52 432v3M54.5 432v2M57 432v3M59.5 432v2M62 432v3M64.5 432v2" stroke="#ddd"/><text x="56" y="442.5" font-size="5" fill="#eee" font-family="Liberation Sans">1 2</text><circle cx="25" cy="457" r="4.5" fill="#777" stroke="#aaa"/><line x1="24" y1="467" x2="37" y2="456" stroke="#c4c4c4" stroke-width="2"/><path d="M20 470Q23 465 27 466Q25 470 20 470Z" fill="#ccc"/><defs><radialGradient id="tx" cx=".3" cy=".7" r=".8"><stop offset="0" stop-color="#222"/><stop offset=".5" stop-color="#666"/><stop offset="1" stop-color="#bbb"/></radialGradient></defs><rect x="49.5" y="455.5" width="18" height="15" rx="2" fill="url(#tx)" stroke="#c8c8c8"/><circle cx="28.5" cy="489" r="6.5" fill="none" stroke="#cfcfcf"/><circle cx="28.5" cy="482.5" r="1.3" fill="#cfcfcf"/><circle cx="22" cy="489.5" r="1.3" fill="#cfcfcf"/><circle cx="33" cy="494" r="1.3" fill="#cfcfcf"/><circle cx="53" cy="490" r="5.5" fill="none" stroke="#cfcfcf"/><circle cx="65" cy="490" r="5.5" fill="none" stroke="#cfcfcf"/><line x1="53" y1="484.5" x2="65" y2="484.5" stroke="#cfcfcf"/><path d="M19 515H22Q26 515 28 511Q30 507 34 508H37" fill="none" stroke="#cfcfcf"/><circle cx="23" cy="515" r="1.5" fill="#444" stroke="#ddd" stroke-width=".8"/><circle cx="33" cy="508" r="1.5" fill="#444" stroke="#ddd" stroke-width=".8"/><path d="M50.5 505V520H66" fill="none" stroke="#bbb"/><rect x="52" y="511" width="5" height="5" fill="#ccc"/><path d="M63 504L67 508L63 512L59 508Z" fill="#ddd"/><path d="M28.5 540Q22 530 20 532Q20 540 23 541Q20 546 25 547Q28 545 28.5 540Q29 545 32 547Q37 546 34 541Q37 540 37 534Q34 531 28.5 540Z" fill="#bdbdbd"/><circle cx="61" cy="537" r="6" fill="#ccc" stroke="#333"/><circle cx="60" cy="538" r="3" fill="none" stroke="#333"/><line x1="55" y1="542" x2="51" y2="546" stroke="#222" stroke-width="1.6"/><path d="M21 572Q22 565 30 560Q34 558 36 560Q36 564 31 567Q25 571 21 572Z" fill="#c0c0c0"/><path d="M52 571L57 565L63 557L67 561L59 568L54 573Z" fill="#bdbdbd"/><path d="M60 562L63 565" stroke="#444"/><rect x="23" y="585.5" width="11" height="10" fill="#7a7a7a" stroke="#cfcfcf"/><path d="M19 586h3M35 586h3M19 595.5h3M35 595.5h3M23.5 581v3M33.5 581v3M23.5 597v3M33.5 597v3" stroke="#cfcfcf"/><path d="M51 598L60 590L64 593Z" fill="#c8c8c8"/><path d="M60 590L66 584L68 586L64 593Z" fill="#888"/><path d="M22 615V609Q23 607 24 609V613V606Q25 604 26 606V612V605Q27 603 28 605V612V607Q29 605 30 607V615L32 612Q34 611 34 613L30 622H24Z" fill="#c4c4c4"/><circle cx="58" cy="612" r="4.5" fill="#777" stroke="#c8c8c8" stroke-width="1.3"/><line x1="61" y1="615.5" x2="66" y2="621" stroke="#c8c8c8" stroke-width="2.2"/><path d="M14.5 52L19.5 57M19.5 52L14.5 57" stroke="#d4d4d4" stroke-width="1.6"/><path d="M70.5 51.5V57.5L67 54.5Z M74.5 51.5V57.5L71 54.5Z" fill="#c4c4c4"/><rect x="34" y="65" width="1" height="3" fill="#111"/><rect x="36" y="65" width="1" height="3" fill="#111"/><rect x="38" y="65" width="1" height="3" fill="#111"/><rect x="40" y="65" width="1" height="3" fill="#111"/><rect x="42" y="65" width="1" height="3" fill="#111"/><rect x="44" y="65" width="1" height="3" fill="#111"/><rect x="46" y="65" width="1" height="3" fill="#111"/><rect x="48" y="65" width="1" height="3" fill="#111"/><rect x="50" y="65" width="1" height="3" fill="#111"/><rect x="52" y="65" width="1" height="3" fill="#111"/><rect x="32.5" y="649.5" width="35" height="34.5" fill="#fff"/><rect x="42" y="659" width="16" height="15.5" fill="#444"/><line x1="33" y1="683.5" x2="67" y2="650" stroke="#f01010" stroke-width="1.6"/><rect x="14.5" y="631.5" width="34.5" height="34.5" fill="#f5b11b" stroke="#fff" stroke-width="1.4"/><path d="M58 635H62Q64 635 64 638V641M56.5 634L58.5 632.5V636.5Z M62.5 640.5H65.5L64 642.5Z" fill="none" stroke="#d8d8d8" stroke-width=".9"/><rect x="15.5" y="673.5" width="6" height="6" fill="#ddd" stroke="#222"/><rect x="18.5" y="676.5" width="6" height="6" fill="#333" stroke="#ddd"/><rect x="15" y="692" width="60.5" height="18.5" fill="#3d3d3d"/><rect x="36" y="693" width="19" height="17" fill="#575757"/><rect x="56" y="693" width="19" height="17" fill="#575757"/><rect x="19.5" y="695.5" width="11" height="11" fill="#f5b11b" stroke="#222"/><defs><linearGradient id="gr2"><stop offset="0" stop-color="#fff"/><stop offset="1" stop-color="#222"/></linearGradient></defs><rect x="39.5" y="695.5" width="12" height="11" fill="url(#gr2)" stroke="#222"/><rect x="59.5" y="695.5" width="12" height="11" fill="#fff" stroke="#222"/><line x1="60" y1="706" x2="71" y2="696" stroke="#f01010" stroke-width="2.4"/><rect x="15" y="717" width="60.5" height="16.5" fill="#3d3d3d"/><rect x="36" y="718" width="19" height="15" fill="#575757"/><rect x="56" y="718" width="19" height="15" fill="#545454"/><circle cx="25" cy="725" r="3.5" fill="none" stroke="#c8c8c8"/><rect x="25" y="725" width="4" height="4" fill="#aaa"/><circle cx="45" cy="725" r="4" fill="none" stroke="#c8c8c8"/><path d="M48 727V729H46" stroke="#c8c8c8" fill="none"/><circle cx="65.5" cy="725.5" r="3.5" fill="none" stroke="#707070"/><rect x="32.5" y="749.5" width="13" height="10" fill="#555" stroke="#ddd"/><rect x="38.5" y="744.5" width="15" height="10" fill="#707070" stroke="#e8e8e8"/></svg>

<div id="dlg" class="abs">
 <div class="title">Rotate</div>
 <div class="abs" style="left:16px;top:51px;width:338px;height:93px;border:1px solid #2c2c2c;box-shadow:inset 1px 1px 0 #555,1px 1px 0 #555"></div>
 <div class="lbl" style="left:22px;top:44.8px;padding:0 3px;background:#4a4a4a;font-size:12.8px">Rotate</div>
 <div class="lbl" style="left:38px;top:79.5px;font-size:13.5px">Angle:</div>
 <svg class="abs" style="left:78px;top:69px" width="36" height="36"><circle cx="17.5" cy="18" r="16.2" fill="#575757" stroke="#d47f2c" stroke-width="1.3"/><line x1="17.5" y1="18" x2="33" y2="17.4" stroke="#1c1c1c" stroke-width="1.4"/><circle cx="17.5" cy="18" r="1.2" fill="#d47f2c"/></svg>
 <div class="abs" style="left:119px;top:77px;width:67px;height:20px;border:2px solid #e0821f;background:#a6a6a6"></div>
 <div class="abs" style="left:124px;top:80px;width:14px;height:14px;background:#c4f7b4"></div>
 <div class="abs" style="left:124px;top:79px;font-size:13.5px;line-height:16px;color:#000">2°</div>
 <div class="lbl" style="left:25px;top:116.5px;font-size:13.6px">Options:</div>
 <div class="abs" style="left:79px;top:116px;width:12px;height:12px;border:1px solid #3a3a3a;background:#4d4d4d"></div>
 <svg class="abs" style="left:79px;top:112px" width="14" height="16"><path d="M2.5 9L5.5 12.5L11.5 3" fill="none" stroke="#7c7c7c" stroke-width="1.6"/></svg>
 <div class="lbl dis" style="left:96px;top:115.9px;font-size:13.1px">Transform Objects</div>
 <div class="abs" style="left:215px;top:116px;width:13px;height:12px;border:1px solid #333;background:#4a4a4a"></div>
 <div class="lbl dis" style="left:232.5px;top:115.9px;font-size:13.1px">Transform Patterns</div>
 <div class="abs" style="left:16px;top:156px;width:12px;height:12px;border:1px solid #333;background:#4f4f4f"></div>
 <svg class="abs" style="left:16px;top:152px" width="14" height="16"><path d="M2.5 9L5.5 12.5L11.5 3" fill="none" stroke="#dcdcdc" stroke-width="1.6"/></svg>
 <div class="lbl" style="left:31.5px;top:155.4px;font-size:12.6px">Preview</div>
 <div class="btn" style="left:16px;top:193px;width:90px">Copy</div>
 <div class="btn" style="left:167px;top:193px;width:90px">Cancel</div>
 <div class="btn" style="left:263px;top:192px;width:92px;height:26px;border:2px solid #1d1d1d">OK</div>
</div>
</body></html>
